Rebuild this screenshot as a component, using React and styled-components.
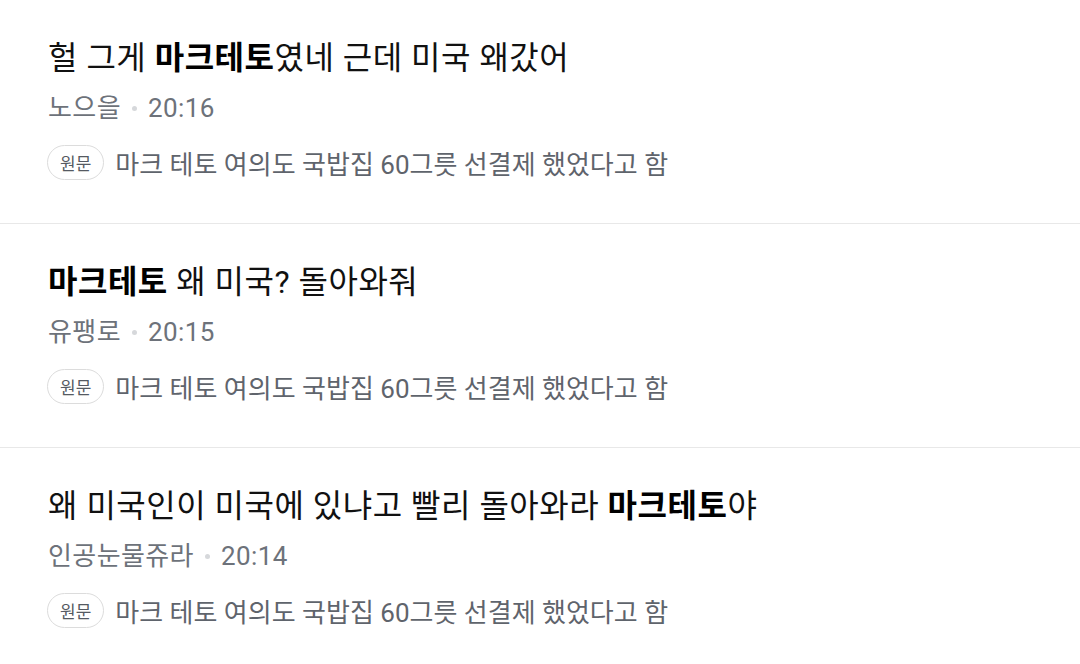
import styled, { createGlobalStyle } from 'styled-components'

const GlobalStyle = createGlobalStyle`
body {
  margin:0;
  background:#fff;
  font-family:Roboto, "Noto Sans CJK KR", "Noto Sans", sans-serif;
}
`

const List = styled.div`
display:flex;
flex-direction:column;
`
const Item = styled.div`
padding:38px 48px 43px;
border-bottom:1px solid #e8e8e8;
`
const Title = styled.div`
font-size:32px;
line-height:40px;
letter-spacing:0.5px;
color:#111;
white-space:nowrap;
b {
  font-weight:700;
  color:#000;
}
`
const Meta = styled.div`
margin-top:14px;
display:flex;
align-items:center;
font-size:26px;
line-height:32px;
letter-spacing:0.4px;
color:#6d727a;
`
const Dot = styled.span`
width:5px;
height:5px;
border-radius:50%;
background:#d6d8db;
margin:0 11px 0 11px;
`
const Snippet = styled.div`
margin-top:20px;
display:flex;
align-items:center;
height:36px;
font-size:26px;
color:#5f646c;
`
const Badge = styled.span`
display:flex;
align-items:center;
justify-content:center;
height:33px;
padding:0 12px;
border:1px solid #dcdcdc;
border-radius:18px;
font-size:17px;
color:#555a62;
margin-left:-1px;
margin-right:11px;
`

const posts = [
  { title: ['헐 그게 ', '마크테토', '였네 근데 미국 왜갔어'], author: '노으을', time: '20:16' },
  { title: ['', '마크테토', ' 왜 미국? 돌아와줘'], author: '유팽로', time: '20:15' },
  { title: ['왜 미국인이 미국에 있냐고 빨리 돌아와라 ', '마크테토', '야'], author: '인공눈물쥬라', time: '20:14' },
]

const App = () => {
  return (
    <List>
      <GlobalStyle />
      {posts.map((p) => (
        <Item key={p.time}>
          <Title>
            {p.title[0]}<b>{p.title[1]}</b>{p.title[2]}
          </Title>
          <Meta>
            {p.author}
            <Dot />
            {p.time}
          </Meta>
          <Snippet>
            <Badge>원문</Badge>
            마크 테토 여의도 국밥집 60그릇 선결제 했었다고 함
          </Snippet>
        </Item>
      ))}
    </List>
  )
}

export default App
